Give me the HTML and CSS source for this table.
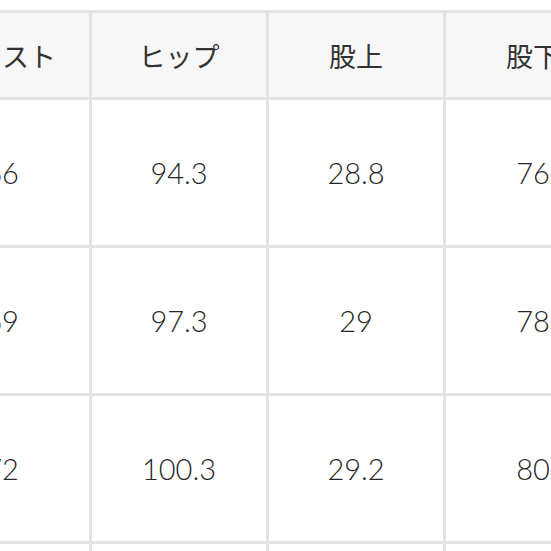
FILE: index.html
```html
<!DOCTYPE html>
<html lang="ja">
<head>
<meta charset="utf-8">
<link rel="stylesheet" href="styles.css">
</head>
<body>
<div class="sheet">
  <div class="cell head">ウエスト</div>
  <div class="cell head">ヒップ</div>
  <div class="cell head">股上</div>
  <div class="cell head">股下</div>

  <div class="cell">66</div>
  <div class="cell">94.3</div>
  <div class="cell">28.8</div>
  <div class="cell">76</div>

  <div class="cell">69</div>
  <div class="cell">97.3</div>
  <div class="cell">29</div>
  <div class="cell">78</div>

  <div class="cell">72</div>
  <div class="cell">100.3</div>
  <div class="cell">29.2</div>
  <div class="cell">80</div>

  <div class="cell">75</div>
  <div class="cell">103.3</div>
  <div class="cell">29.4</div>
  <div class="cell">82</div>
</div>
</body>
</html>
```

FILE: styles.css
```css
html, body {
  margin: 0;
  padding: 0;
  background: #ffffff;
  overflow: hidden;
  width: 551px;
  height: 551px;
}

.sheet {
  display: grid;
  grid-template-columns: repeat(4, 174px);
  grid-template-rows: 84px repeat(4, 145px);
  gap: 3px;
  padding: 3px 3px 3px 0;
  margin: 10px 0 0 -85px;
  width: max-content;
  background: #e3e3e3;
  font-family: "Lato", "Noto Sans CJK JP", sans-serif;
  font-size: 29px;
  font-weight: 300;
  color: #262626;
}

.cell {
  background: #ffffff;
  display: flex;
  align-items: center;
  justify-content: center;
}

.head {
  background: #f7f7f7;
  font-family: "Noto Sans CJK JP", sans-serif;
  font-size: 27px;
  font-weight: 400;
  color: #333333;
}
```
